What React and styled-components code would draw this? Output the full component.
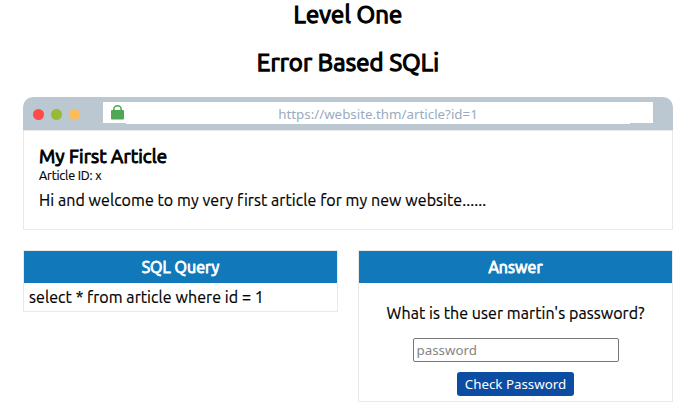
import React from "react";
import styled, { createGlobalStyle } from "styled-components";

const GlobalStyle = createGlobalStyle`
  *, *::before, *::after { box-sizing: border-box; }
  body {
    margin: 0;
    background: #fff;
    color: #000;
    font-family: Ubuntu, "Noto Sans", sans-serif;
    font-size: 16px;
    overflow: hidden;
  }
`;

const Page = styled.main`
  height: 408px;
  padding: 1px 20px 0 23px;
  overflow: hidden;
`;

const Text = styled.div`
  font-size: ${(p) => p.$size || 16}px;
  line-height: ${(p) => p.$line || 20}px;
  letter-spacing: ${(p) => p.$track ?? 0.065}px;
  -webkit-text-stroke: ${(p) => p.$stroke ?? 0.2}px currentColor;
  white-space: nowrap;
`;

const Title = styled(Text).attrs({ as: "h1", $size: 24, $line: 28, $stroke: 1.25 })`
  margin: 0 0 20px;
  font-weight: 400;
  text-align: center;
`;

const Browser = styled.section`
  height: 133px;
  margin-bottom: 20px;
`;

const BrowserBar = styled.header`
  display: flex;
  align-items: flex-start;
  height: 33px;
  padding: 5px 20px 0 10px;
  border-radius: 10px 10px 0 0;
  background: #bbc7d1;
`;

const Dots = styled.div`
  display: flex;
  gap: 7px;
  width: 70px;
  padding-top: 7px;
`;

const Dot = styled.span`
  width: 11px;
  height: 11px;
  border-radius: 50%;
  background: ${(p) => p.$color};
`;

const AddressBar = styled.div`
  display: flex;
  width: 550px;
  height: 21px;
  background: #fff;
`;

const LockSlot = styled.div`
  width: 23px;
  padding: 3px 0 0 8px;
  line-height: 0;
`;

const Url = styled.div`
  width: 504px;
  height: 22px;
  background: #fff;
  color: #9aabbf;
  font: 13.33px/24px "Noto Sans", sans-serif;
  text-align: center;
`;

const Article = styled.article`
  height: 100px;
  padding: 16px 15px 0;
  border: 1px solid #e9e9e9;
`;

const Columns = styled.div`
  display: grid;
  grid-template-columns: 315px 315px;
  gap: 20px;
  align-items: start;
`;

const Panel = styled.section`
  height: ${(p) => p.$height}px;
  border: 1px solid #e9e9e9;
`;

const PanelHead = styled(Text).attrs({ as: "h2", $line: 32, $stroke: 0.9 })`
  margin: 0;
  background: #1179ba;
  color: #fff;
  font-weight: 400;
  text-align: center;
`;

const Query = styled.div`
  padding: 4px 5px;
`;

const AnswerForm = styled.form`
  display: flex;
  flex-direction: column;
  align-items: center;
  padding-top: 20px;
`;

const PasswordInput = styled.input`
  width: 206px;
  height: 24px;
  margin: 15px 0 10px;
  padding: 1px 3px;
  border: 1px solid #767676;
  border-radius: 2px;
  font: 13.33px "Noto Sans", sans-serif;
  &::placeholder { color: #858585; }
`;

const CheckButton = styled.button`
  width: 117px;
  height: 24px;
  padding: 0;
  border: 0;
  border-radius: 3px;
  background: #0b4da2;
  color: #fff;
  font: 13.33px/24px "Noto Sans", sans-serif;
  white-space: nowrap;
`;

const Lock = () => (
  <svg width="13" height="15" viewBox="0 0 13 15">
    <path d="M2.8 6V4.3a3.7 3.5 0 0 1 7.4 0V6" fill="none" stroke="#4fa653" strokeWidth="1.6" />
    <rect y="5" width="13" height="9.4" rx="1" fill="#4fa653" />
  </svg>
);

export default function App() {
  return (
    <Page>
      <GlobalStyle />
      <Title $track={0.13}>Level One</Title>
      <Title $track={0.13}>Error Based SQLi</Title>
      <Browser>
        <BrowserBar>
          <Dots>
            <Dot $color="#ff4a47" />
            <Dot $color="#99ba34" />
            <Dot $color="#ffbb55" />
          </Dots>
          <AddressBar>
            <LockSlot><Lock /></LockSlot>
            <Url>https://website.thm/article?id=1</Url>
          </AddressBar>
        </BrowserBar>
        <Article>
          <Text $size={18.72} $stroke={1} $track={0.15}>My First Article</Text>
          <Text $size={12.6} $line={16} $track={-0.16}>Article ID: x</Text>
          <Text $line={34}>Hi and welcome to my very first article for my new website......</Text>
        </Article>
      </Browser>
      <Columns>
        <Panel $height={62}>
          <PanelHead>SQL Query</PanelHead>
          <Query><Text>select * from article where id = 1</Text></Query>
        </Panel>
        <Panel $height={152}>
          <PanelHead>Answer</PanelHead>
          <AnswerForm onSubmit={(e) => e.preventDefault()}>
            <Text>What is the user martin's password?</Text>
            <PasswordInput placeholder="password" />
            <CheckButton>Check Password</CheckButton>
          </AnswerForm>
        </Panel>
      </Columns>
    </Page>
  );
}
